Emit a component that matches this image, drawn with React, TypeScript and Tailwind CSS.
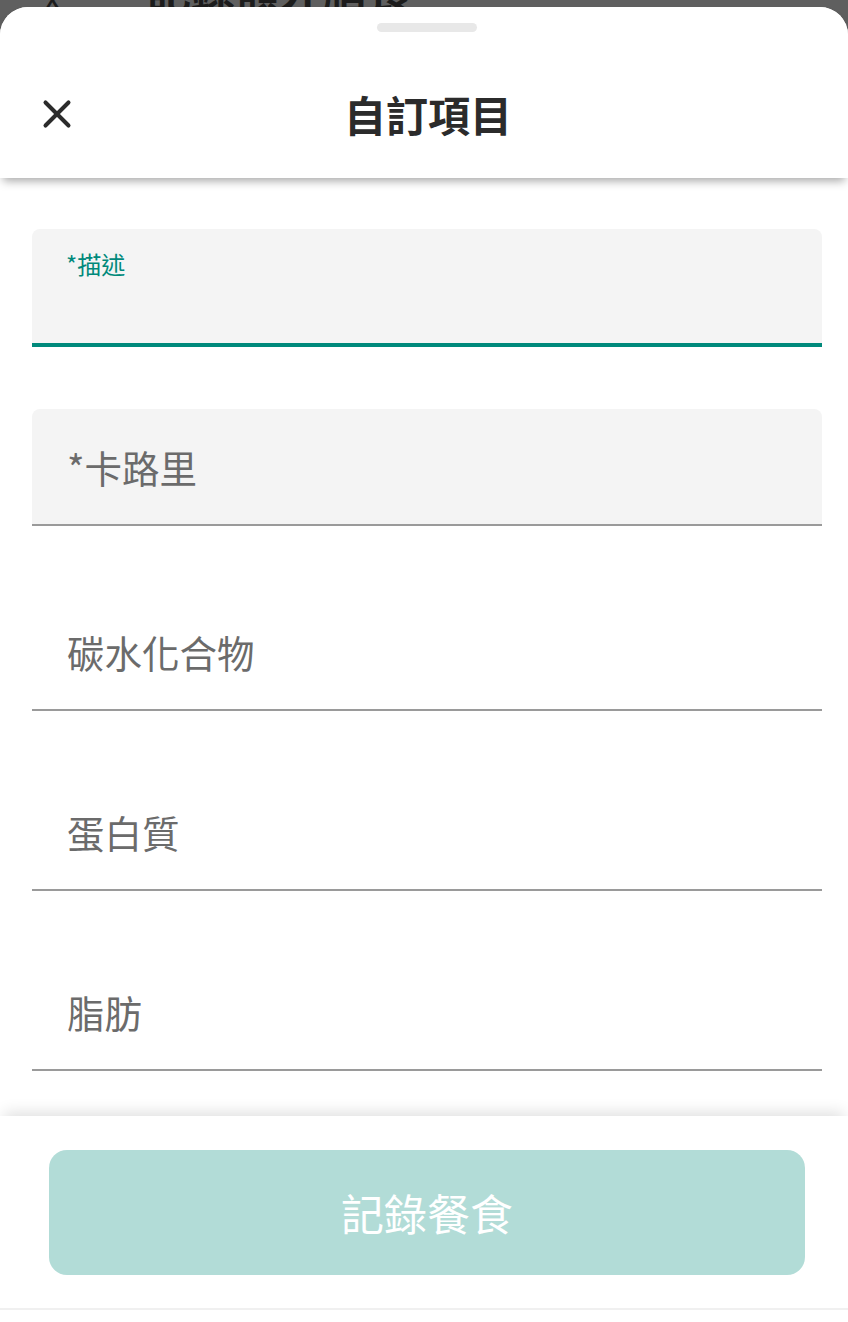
import { X } from "lucide-react";

const font = { fontFamily: '"Noto Sans CJK TC", "Noto Sans", sans-serif' };

interface FieldProps {
  label: string;
  filled?: boolean;
  className?: string;
}

function Field({ label, filled, className }: FieldProps) {
  return (
    <div
      className={`flex h-[117px] items-center border-b-2 border-[#9a9a9a] pl-[35px] ${
        filled ? "rounded-t-[8px] bg-[#f4f4f4]" : ""
      } ${className ?? ""}`}
    >
      <span className="text-[37.5px] leading-none text-[#6b6b6b]">{label}</span>
    </div>
  );
}

export default function App() {
  return (
    <div className="flex h-[1322px] w-[848px] flex-col overflow-hidden bg-[#5f5f5f]" style={font}>
      {/* page underneath the sheet */}
      <div className="flex h-[7px] items-end gap-[86px] overflow-hidden pl-[44px]">
        <span className="mb-[-6px] text-[34px] leading-none text-[#1c1c1c]">x</span>
        <span className="mb-[-4px] text-[44px] font-bold leading-none text-[#1c1c1c]">記錄額外膳食</span>
      </div>

      <div className="flex flex-1 flex-col rounded-t-[28px] bg-white">
        <div className="relative z-10 h-[171px] rounded-t-[28px] bg-white shadow-[0_6px_10px_-3px_rgba(0,0,0,0.35)]">
          <div className="ml-[377px] mt-[16px] h-[9px] w-[100px] rounded-full bg-[#e8e8e8]" />
          <div className="relative mt-[21px] flex h-[122px] items-center justify-center pl-[8px]">
            <X className="absolute left-[34px] h-[46px] w-[46px] text-[#2b2b2b]" strokeWidth={2.1} />
            <h1 className="text-[42px] font-bold leading-none text-[#2b2b2b]">自訂項目</h1>
          </div>
        </div>

        <div className="flex flex-col pl-[32px] pr-[26px] pt-[51px]">
          <div className="flex h-[118px] flex-col rounded-t-[8px] border-b-4 border-[#00897b] bg-[#f4f4f4] pl-[34px] pt-[23px]">
            <span className="text-[24px] leading-none text-[#00897b]">*描述</span>
          </div>
          <Field label="*卡路里" filled className="mt-[62px]" />
          <Field label="碳水化合物" className="mt-[68px]" />
          <Field label="蛋白質" className="mt-[63px]" />
          <Field label="脂肪" className="mt-[63px]" />
        </div>

        <div className="mt-auto flex flex-col bg-white shadow-[0_-8px_14px_-4px_rgba(0,0,0,0.12)]">
          <div className="pl-[49px] pr-[43px] pt-[34px] pb-[33px]">
            <button className="flex h-[125px] w-full items-center justify-center rounded-[18px] bg-[#b2dcd7] text-[43px] text-white">
              記錄餐食
            </button>
          </div>
          <div className="h-[2px] bg-[#f0f0f0]" />
          <div className="h-[12px] bg-white" />
        </div>
      </div>
    </div>
  );
}
